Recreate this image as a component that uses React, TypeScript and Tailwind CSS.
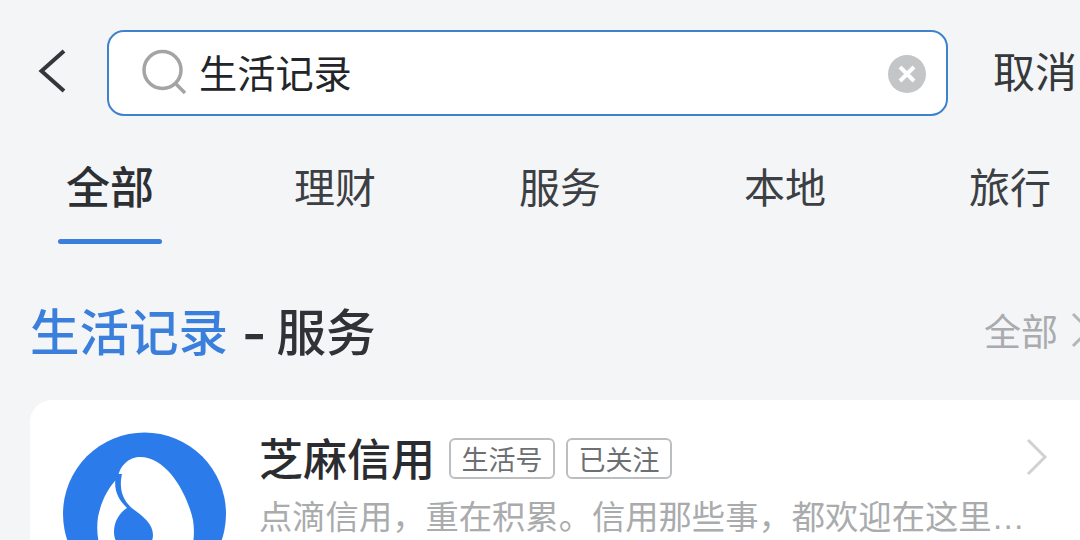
const font = { fontFamily: '"Noto Sans CJK SC", "Liberation Sans", sans-serif' };

function Tab({ label, active }: { label: string; active?: boolean }) {
  return (
    <div className="flex w-[104px] flex-col items-center">
      <div className={active ? "flex h-[72px] items-center text-[44px] leading-none font-medium whitespace-nowrap text-[#2c2f33]" : "flex h-[72px] items-center text-[41px] leading-none whitespace-nowrap text-[#3c3f43]"}>
        {label}
      </div>
      <div className={active ? "mt-[18px] h-[5px] w-full rounded-full bg-[#3a7fdc]" : "mt-[18px] h-[5px] w-full"} />
    </div>
  );
}

function Tag({ label }: { label: string }) {
  return (
    <div className="mt-[3px] flex h-[41px] w-[106px] items-center justify-center rounded-[6px] border-2 border-[#bcbfc1] text-[27px] leading-none whitespace-nowrap text-[#6d7072]">
      {label}
    </div>
  );
}

export default function App() {
  return (
    <div style={font} className="h-[540px] w-[1080px] overflow-hidden bg-[#f4f5f7]">
      <div className="pt-[30px]">
        <div className="flex h-[86px] items-center pl-[38px]">
          <svg width="28" height="44" viewBox="0 0 28 44" className="shrink-0 -mt-[4px]">
            <path d="M26 2 L3.5 22 L26 42" fill="none" stroke="#33363a" strokeWidth="4" />
          </svg>
          <div className="ml-[41px] flex h-[86px] w-[841px] shrink-0 items-center rounded-[17px] border-2 border-[#3f82cc] bg-white pl-[33px] pr-[20px]">
            <svg width="44" height="46" viewBox="0 0 44 46" className="shrink-0 -mt-[2px]">
              <circle cx="20.5" cy="21" r="18.5" fill="none" stroke="#a2a4a5" strokeWidth="3.5" />
              <path d="M33 34 L43 44" fill="none" stroke="#a2a4a5" strokeWidth="3.5" />
            </svg>
            <span className="ml-[13px] -mt-[1px] text-[38.2px] leading-none whitespace-nowrap text-[#232528]">生活记录</span>
            <svg width="38" height="38" viewBox="0 0 38 38" className="ml-auto shrink-0 mt-[2px]">
              <circle cx="19" cy="19" r="19" fill="#c3c5c6" />
              <path d="M12 12 L26 26 M26 12 L12 26" stroke="#ffffff" strokeWidth="4" />
            </svg>
          </div>
          <span className="ml-[45px] -mt-[7px] text-[42px] leading-none whitespace-nowrap text-[#36393c]">取消</span>
        </div>

        <div className="mt-[33px] flex gap-[121px] pl-[58px]">
          <Tab label="全部" active />
          <Tab label="理财" />
          <Tab label="服务" />
          <Tab label="本地" />
          <Tab label="旅行" />
        </div>

        <div className="mt-[46px] flex h-[80px] items-center pl-[30px]">
          <span className="text-[49.5px] leading-none font-medium whitespace-nowrap text-[#3a7fdc]">生活记录</span>
          <span className="ml-[19px] text-[49.5px] leading-none font-medium whitespace-nowrap text-[#2f3236]"><span className="inline-block -translate-x-[2px] scale-x-[1.3] font-bold">-</span> 服务</span>
          <span className="ml-auto text-[37px] leading-none whitespace-nowrap text-[#a9abae]">全部</span>
          <svg width="22" height="38" viewBox="0 0 22 38" className="ml-[13px] -mr-[13px] shrink-0">
            <path d="M2 3 L18 19 L2 35" fill="none" stroke="#b3b5b7" strokeWidth="3" />
          </svg>
        </div>

        <div className="mt-[30px] ml-[30px] flex h-[200px] rounded-tl-[22px] bg-white pl-[33px] pt-[32px]">
          <svg width="163" height="164" viewBox="0 0 163 164" className="shrink-0">
            <circle cx="81.5" cy="82" r="81.5" fill="#2c7bea" />
            <path d="M77 25 C104 25 124 61 130 88 C135 120 120 150 82 152 C50 152 30 120 35 85 C38 70 45 55 55 46 C56 35 65 25 77 25 Z" fill="#ffffff" />
            <path d="M53 42 C50 58 55 67 64 76 C56 81 51 90 51 100 C51 125 90 125 90 103 C90 92 80 84 70 77 C62 70 55 60 59 42 Z" fill="#2c7bea" />
          </svg>
          <div className="ml-[33px] min-w-0 flex-1">
            <div className="flex h-[55px] items-center -mt-[3px]">
              <span className="text-[44px] leading-none font-medium whitespace-nowrap text-[#2a2c30]">芝麻信用</span>
              <div className="ml-[14px]"><Tag label="生活号" /></div>
              <div className="ml-[11px]"><Tag label="已关注" /></div>
              <svg width="24" height="38" viewBox="0 0 24 38" className="ml-[353px] shrink-0">
                <path d="M3 2 L20 19 L3 36" fill="none" stroke="#cfd1d2" strokeWidth="3" />
              </svg>
            </div>
            <div className="mt-[8px] text-[33.3px] leading-[46px] whitespace-nowrap text-[#a9abad]">点滴信用，重在积累。信用那些事，都欢迎在这里<span className="font-['Liberation_Sans']">…</span></div>
          </div>
        </div>
      </div>
    </div>
  );
}
